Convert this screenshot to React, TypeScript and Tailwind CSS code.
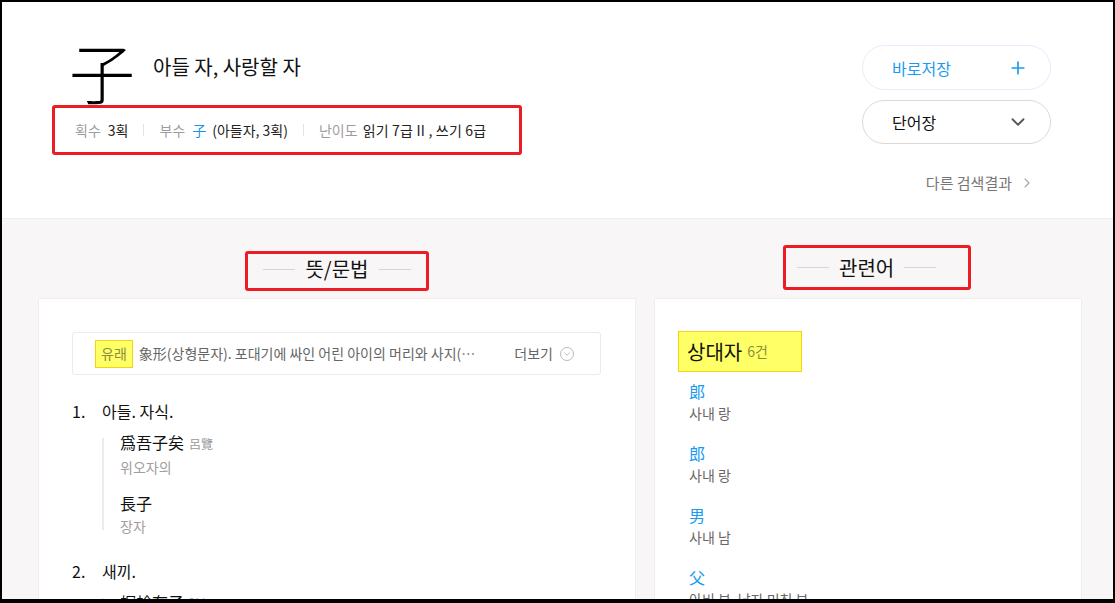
import { Plus, ChevronDown, ChevronRight } from "lucide-react";

const related = [
  { hanja: "郞", mean: "사내 랑" },
  { hanja: "郎", mean: "사내 랑" },
  { hanja: "男", mean: "사내 남" },
  { hanja: "父", mean: "아비 부, 남자 미칭 부" },
];

function TitleLines({ text }: { text: string }) {
  return (
    <>
      <span className="w-[32px] h-px bg-[#dcd2cf]" />
      <span className="mx-[10px] text-[20px] leading-[28px] text-[#111]">{text}</span>
      <span className="w-[32px] h-px bg-[#dcd2cf]" />
    </>
  );
}

function Example({ hanja, source, reading }: { hanja: string; source?: string; reading: string }) {
  return (
    <div>
      <div className="leading-[20px] text-[16px] text-[#111]">
        {hanja}
        {source && <span className="ml-[5px] text-[12px] text-[#999]">{source}</span>}
      </div>
      <div className="mt-[3px] leading-[20px] text-[14px] text-[#a39d9b]">{reading}</div>
    </div>
  );
}

export default function App() {
  return (
    <div className="w-[1115px] h-[603px] overflow-hidden border-black border-t-2 border-l-2 border-r-2 border-b-4 bg-[#f8f6f6] font-['Noto_Sans_CJK_KR',sans-serif]">
      {/* header */}
      <header className="h-[217px] bg-white border-b border-[#efebeb] flex justify-between pl-[50px] pr-[62px] pt-[36px]">
        <div>
          <div className="flex items-center pl-[17px] h-[64px]">
            <span className="text-[66px] leading-[64px] font-light text-black">子</span>
            <span className="ml-[18px] -mt-[6px] text-[20px] leading-[28px] text-[#111]">아들 자, 사랑할 자</span>
          </div>
          <div className="mt-[3px] w-[470px] h-[50px] border-[3px] border-[#ec1c24] rounded-[3px] flex items-center pl-[20px] text-[14px] leading-[20px]">
            <span className="text-[#a19c9c]">획수</span>
            <span className="ml-[7px] text-[#222]">3획</span>
            <span className="mx-[15px] w-px h-[12px] bg-[#e6e3e3]" />
            <span className="text-[#a19c9c]">부수</span>
            <span className="ml-[7px] text-[#1a92ec]">子</span>
            <span className="ml-[6px] text-[#222]">(아들자, 3획)</span>
            <span className="mx-[15px] w-px h-[12px] bg-[#e6e3e3]" />
            <span className="text-[#a19c9c]">난이도</span>
            <span className="ml-[5px] text-[#222] tracking-[0.2px]">읽기 7급 II , 쓰기 6급</span>
          </div>
        </div>
        <div className="w-[189px] mt-[7px] flex flex-col">
          <button className="h-[45px] rounded-full border border-[#e2eefb] bg-white flex items-center justify-between pl-[29px] pr-[22px]">
            <span className="text-[16px] text-[#1a9af0]">바로저장</span>
            <Plus size={20} strokeWidth={2} className="text-[#1a9af0]" />
          </button>
          <button className="mt-[10px] h-[44px] rounded-full border border-[#dfd9d5] bg-white flex items-center justify-between pl-[29px] pr-[21px]">
            <span className="text-[16px] text-[#111]">단어장</span>
            <ChevronDown size={22} strokeWidth={2} className="text-[#555]" />
          </button>
          <div className="mt-[29px] self-end pr-[16px] flex items-center text-[15px] leading-[20px] text-[#7a7575]">
            다른 검색결과
            <ChevronRight size={16} strokeWidth={1.6} className="ml-[7px] text-[#aaa4a4]" />
          </div>
        </div>
      </header>

      {/* body */}
      <div className="flex pl-[36px] gap-[18px]">
        {/* meaning column */}
        <section className="w-[598px]">
          <div className="h-[79px] flex justify-center items-start">
            <div className="mt-[32px] w-[184px] h-[40px] border-[3px] border-[#ec1c24] rounded-[3px] flex items-center justify-center pb-[4px]">
              <TitleLines text="뜻/문법" />
            </div>
          </div>
          <div className="bg-white border border-[#f1eeee] h-[320px] pt-[33px] pl-[33px] pr-[34px]">
            <div className="h-[43px] border border-[#ecebeb] rounded-[3px] flex items-center pl-[22px] pr-[26px] text-[14px]">
              <span className="h-[28px] px-[5px] flex items-center bg-[#ffff66] border-[1.5px] border-[#f7d117] text-[#8f8c40]">유래</span>
              <span className="ml-[6px] text-[#666] whitespace-nowrap">象形(상형문자). 포대기에 싸인 어린 아이의 머리와 사지(…</span>
              <span className="ml-auto text-[#666]">더보기</span>
              <span className="ml-[7px] w-[14px] h-[14px] rounded-full border border-[#bbb] flex items-center justify-center">
                <ChevronDown size={10} strokeWidth={1.6} className="text-[#999]" />
              </span>
            </div>

            <div className="mt-[24px] flex text-[16px] leading-[24px] text-[#111]">
              <span className="w-[30px]">1.</span>
              <span>아들. 자식.</span>
            </div>
            <div className="mt-[9px] ml-[30px] flex">
              <span className="my-[6px] w-[2px] bg-[#eeeae8]" />
              <div className="pl-[16px]">
                <Example hanja="爲吾子矣" source="呂覽" reading="위오자의" />
                <div className="mt-[16px]" />
                <Example hanja="長子" reading="장자" />
              </div>
            </div>

            <div className="mt-[23px] flex text-[16px] leading-[24px] text-[#111]">
              <span className="w-[30px]">2.</span>
              <span>새끼.</span>
            </div>
            <div className="mt-[9px] ml-[30px] flex">
              <span className="my-[6px] w-[2px] bg-[#eeeae8]" />
              <div className="pl-[16px]">
                <Example hanja="螟蛉有子" source="詩經" reading="명령유자" />
              </div>
            </div>
          </div>
        </section>

        {/* related words column */}
        <section className="w-[428px]">
          <div className="h-[79px] flex justify-center items-start">
            <div className="ml-[18px] mt-[26px] w-[188px] h-[45px] border-[3px] border-[#ec1c24] rounded-[3px] flex items-center pl-[11px]">
              <TitleLines text="관련어" />
            </div>
          </div>
          <div className="bg-white border border-[#f1eeee] h-[320px] pt-[32px] pl-[23px]">
            <div className="w-[124px] h-[41px] bg-[#ffff66] border-[1.5px] border-[#f7d117] flex items-center pl-[8px]">
              <span className="text-[20px] leading-[28px] text-[#111]">상대자</span>
              <span className="ml-[5px] text-[14px] text-[#8f8c40]">6건</span>
            </div>
            <div className="mt-[8px] pl-[11px] flex flex-col gap-[18px]">
              {related.map((r, i) => (
                <div key={i}>
                  <div className="text-[16px] leading-[22px] text-[#1a9af0]">{r.hanja}</div>
                  <div className="text-[14px] leading-[22px] text-[#6b6666]">{r.mean}</div>
                </div>
              ))}
            </div>
          </div>
        </section>
      </div>
    </div>
  );
}
